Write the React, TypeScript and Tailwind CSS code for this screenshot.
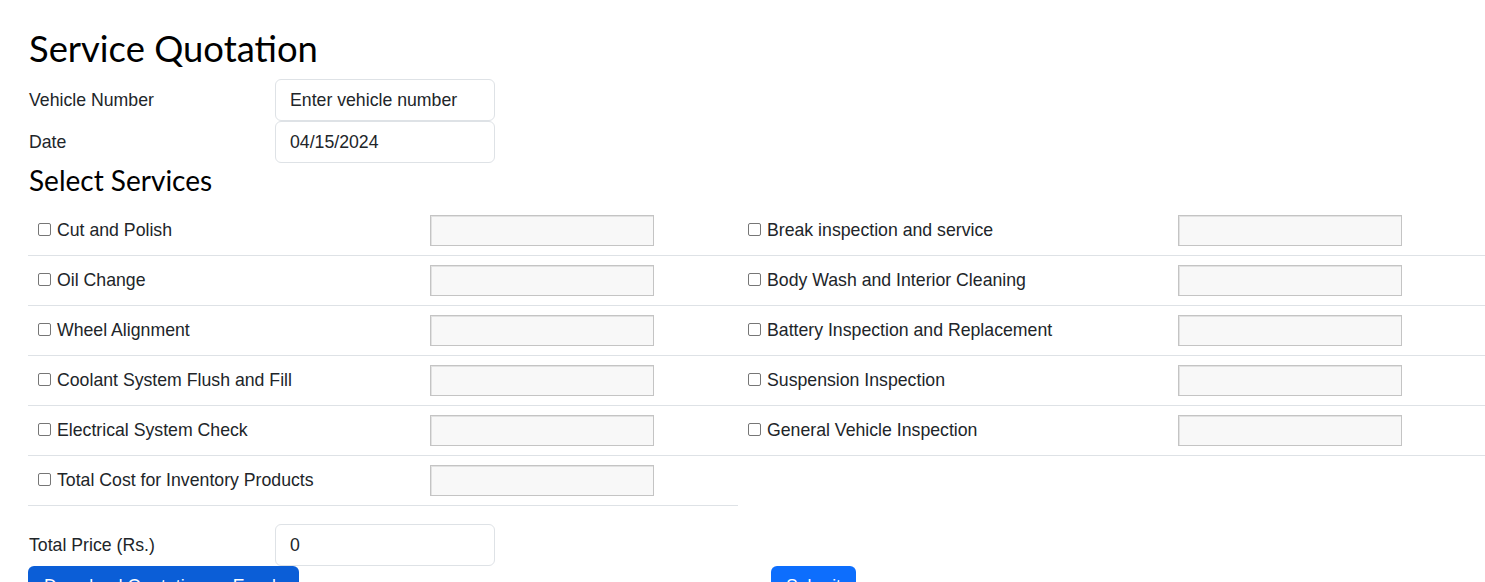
const leftServices = [
  'Cut and Polish',
  'Oil Change',
  'Wheel Alignment',
  'Coolant System Flush and Fill',
  'Electrical System Check',
  'Total Cost for Inventory Products',
]

const rightServices = [
  'Break inspection and service',
  'Body Wash and Interior Cleaning',
  'Battery Inspection and Replacement',
  'Suspension Inspection',
  'General Vehicle Inspection',
]

const ServiceRow = ({ name, labelWidth }: { name: string; labelWidth: string }) => {
  return (
    <div className={`grid ${labelWidth} h-[50px] border-b border-[#dee2e6] items-center`}>
      <label className="flex items-center pl-[10px] text-[17.7px] text-[#212529]">
        <span className="w-[13px] h-[13px] border border-[#767676] rounded-[2px] bg-white mr-[6px] mt-[-1px]" />
        {name}
      </label>
      <div className="pl-[8px]">
        <div className="w-[224px] h-[31px] border border-[#c4c4c4] bg-[#f8f8f8] shadow-[inset_1px_1px_0_#e2e2e2]" />
      </div>
    </div>
  )
}

const FieldRow = ({ label, value }: { label: string; value: string }) => {
  return (
    <div className="flex items-center">
      <span className="w-[247px] pl-[1px] text-[17.7px] text-[#212529]">{label}</span>
      <div className="w-[220px] h-[42px] border border-[#dee2e6] rounded-[6px] px-[14px] flex items-center text-[17.7px] text-[#212529]">
        {value}
      </div>
    </div>
  )
}

export default function App() {
  return (
    <div
      className="bg-white h-[582px] overflow-hidden pl-[28px] pt-[27px]"
      style={{ fontFamily: '"Liberation Sans", Arial, sans-serif' }}
    >
      <h1 className="text-[36.4px] leading-[43px] mb-[9px] text-[#000] pl-[1px] font-[Lato,sans-serif]">
        Service Quotation
      </h1>

      <div className="flex flex-col">
        <FieldRow label="Vehicle Number" value="Enter vehicle number" />
        <FieldRow label="Date" value="04/15/2024" />
      </div>

      <h2 className="text-[28px] leading-[33px] mt-[1px] mb-[9px] pl-[1px] text-[#000] font-[Lato,sans-serif]">
        Select Services
      </h2>

      <div className="flex items-start">
        <div className="w-[710px]">
          {leftServices.map((s) => (
            <ServiceRow key={s} name={s} labelWidth="grid-cols-[394px_1fr]" />
          ))}
        </div>
        <div className="flex-1">
          {rightServices.map((s) => (
            <ServiceRow key={s} name={s} labelWidth="grid-cols-[432px_1fr]" />
          ))}
        </div>
      </div>

      <div className="mt-[18px]">
        <FieldRow label="Total Price (Rs.)" value="0" />
      </div>

      <div className="flex items-start">
        <div className="w-[271px] h-[40px] rounded-[6px] bg-[#0b5ed7] text-white text-[17.7px] leading-[20px] pl-[16px] pt-[10px] whitespace-nowrap overflow-hidden">
          Download Quotation as Excel
        </div>
        <div className="ml-[472px] w-[85px] h-[40px] rounded-[6px] bg-[#0d6efd] text-white text-[17.7px] leading-[20px] pt-[10px] text-center">
          Submit
        </div>
      </div>
    </div>
  )
}
